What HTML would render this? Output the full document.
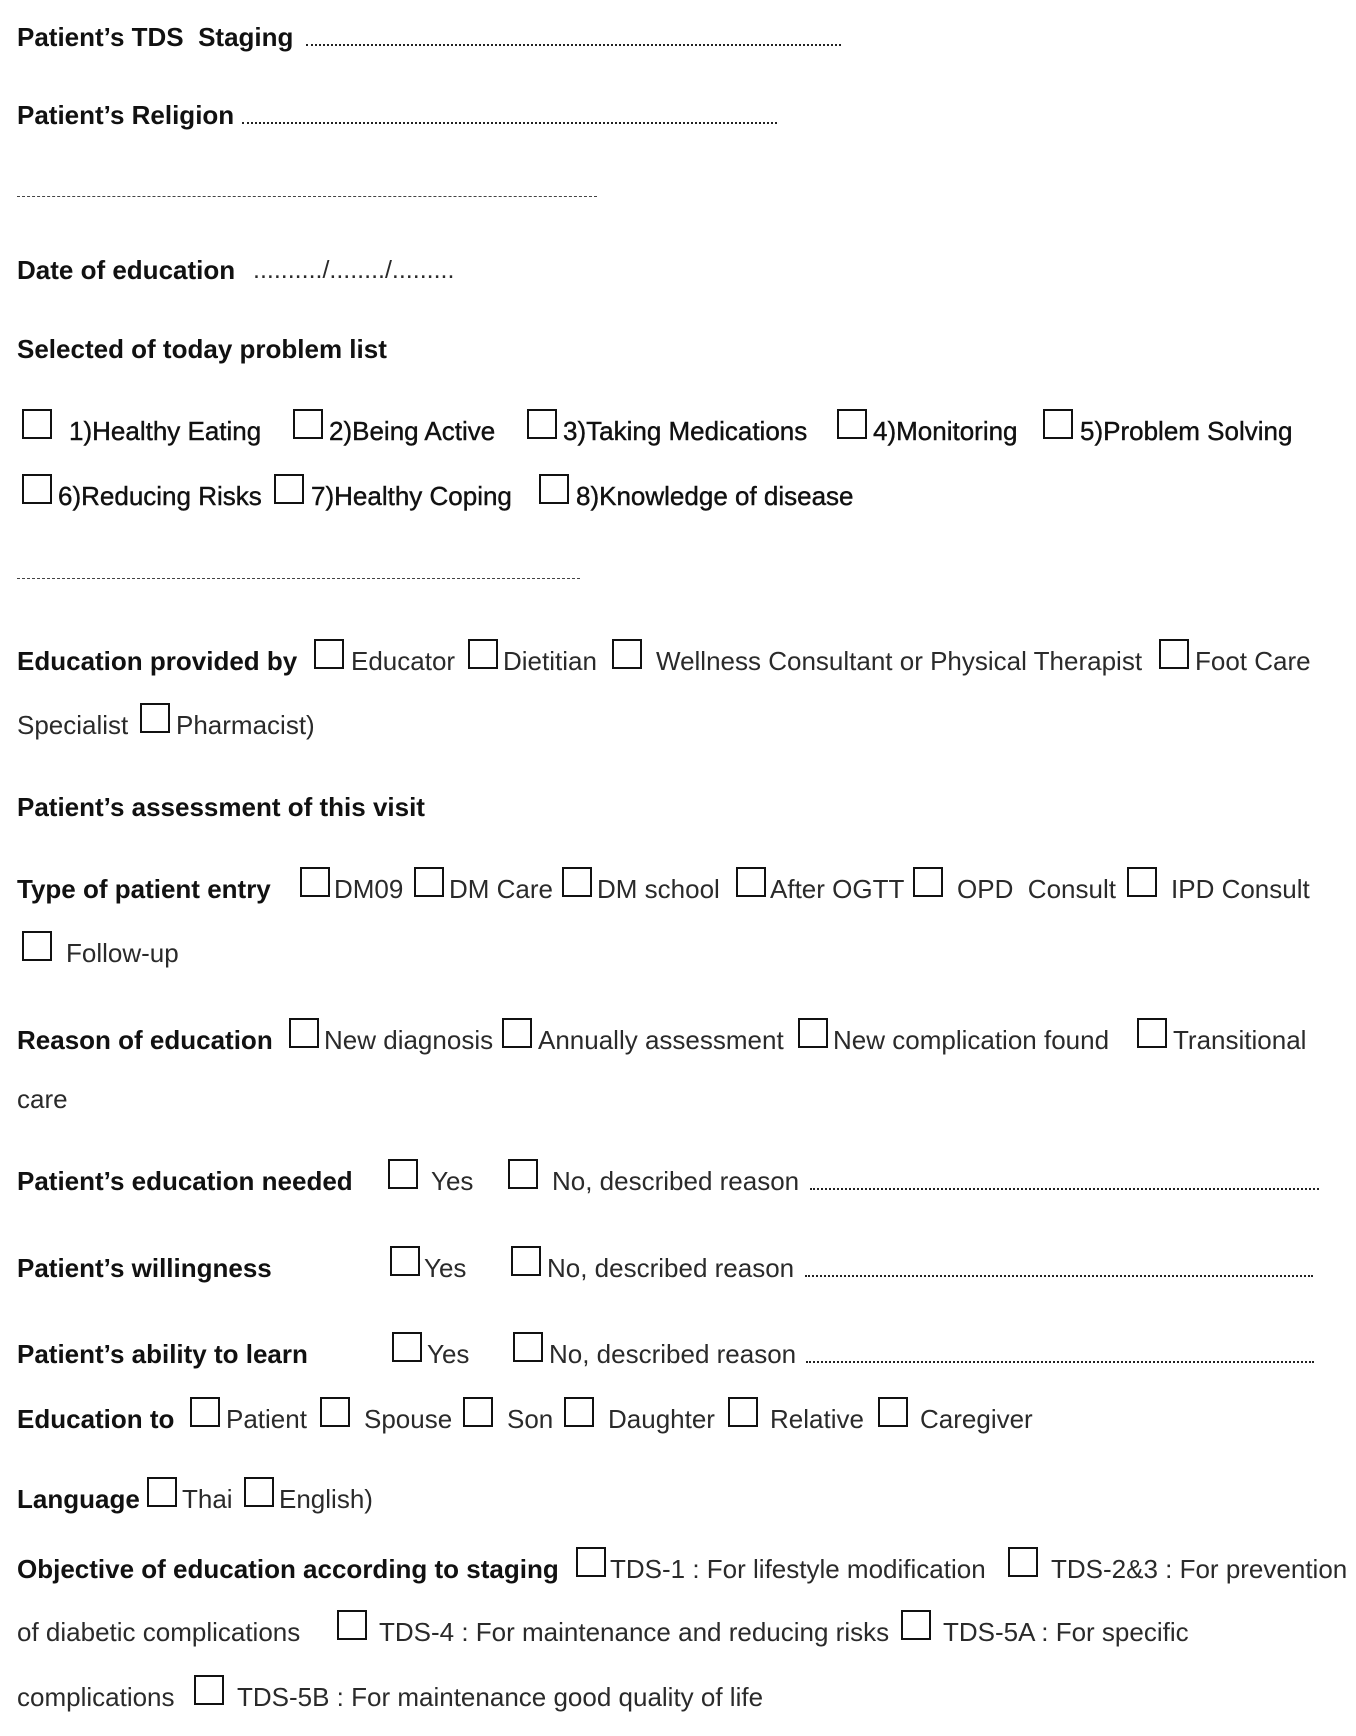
<!DOCTYPE html>
<html><head><meta charset="utf-8"><style>
body{margin:0;background:#fff;width:1356px;height:1736px;position:relative;overflow:hidden;font-family:"Liberation Sans","Noto Sans CJK SC",sans-serif;color:#000}
.t{position:absolute;font-size:26px;line-height:30px;white-space:nowrap;color:#2a2a2a}
.b{color:#111;font-weight:bold}
.p{color:#111;-webkit-text-stroke:0.4px #111}
.c{position:absolute;width:30px;height:30px;box-sizing:border-box;border:2px solid #111}
.d{position:absolute;height:0;border-bottom:2px dotted #222}
.h{position:absolute;height:0;border-bottom:1.5px dashed #444}
</style></head><body>
<span class="t b" style="left:17px;top:22px">Patient’s TDS&nbsp; Staging</span><div class="d" style="left:306px;top:44px;width:535px"></div>
<span class="t b" style="left:17px;top:100px">Patient’s Religion</span><div class="d" style="left:242px;top:122px;width:535px"></div>
<div class="h" style="left:17px;top:196px;width:580px"></div>
<span class="t b" style="left:17px;top:255px">Date of education</span><span class="t" style="left:253px;top:255px;font-size:25px;letter-spacing:0px">........../......../.........</span>
<span class="t b" style="left:17px;top:334px">Selected of today problem list</span>

<div class="c" style="left:22px;top:409px"></div><span class="t p" style="left:69px;top:416px">1)Healthy Eating</span>
<div class="c" style="left:293px;top:409px"></div><span class="t p" style="left:329px;top:416px">2)Being Active</span>
<div class="c" style="left:527px;top:409px"></div><span class="t p" style="left:563px;top:416px">3)Taking Medications</span>
<div class="c" style="left:837px;top:409px"></div><span class="t p" style="left:873px;top:416px">4)Monitoring</span>
<div class="c" style="left:1043px;top:409px"></div><span class="t p" style="left:1080px;top:416px">5)Problem Solving</span>

<div class="c" style="left:22px;top:474px"></div><span class="t p" style="left:58px;top:481px">6)Reducing Risks</span>
<div class="c" style="left:274px;top:474px"></div><span class="t p" style="left:311px;top:481px">7)Healthy Coping</span>
<div class="c" style="left:539px;top:474px"></div><span class="t p" style="left:576px;top:481px">8)Knowledge of disease</span>

<div class="h" style="left:17px;top:578px;width:563px"></div>

<span class="t b" style="left:17px;top:646px">Education provided by</span>
<div class="c" style="left:314px;top:639px"></div><span class="t" style="left:351px;top:646px">Educator</span>
<div class="c" style="left:468px;top:639px"></div><span class="t" style="left:503px;top:646px">Dietitian</span>
<div class="c" style="left:612px;top:639px"></div><span class="t" style="left:656px;top:646px">Wellness Consultant or Physical Therapist</span>
<div class="c" style="left:1159px;top:639px"></div><span class="t" style="left:1195px;top:646px">Foot Care</span>
<span class="t" style="left:17px;top:710px">Specialist</span>
<div class="c" style="left:140px;top:703px"></div><span class="t" style="left:176px;top:710px">Pharmacist)</span>

<span class="t b" style="left:17px;top:792px">Patient’s assessment of this visit</span>

<span class="t b" style="left:17px;top:874px">Type of patient entry</span>
<div class="c" style="left:300px;top:867px"></div><span class="t" style="left:334px;top:874px">DM09</span>
<div class="c" style="left:414px;top:867px"></div><span class="t" style="left:449px;top:874px">DM Care</span>
<div class="c" style="left:562px;top:867px"></div><span class="t" style="left:597px;top:874px">DM school</span>
<div class="c" style="left:736px;top:867px"></div><span class="t" style="left:770px;top:874px">After OGTT</span>
<div class="c" style="left:913px;top:867px"></div><span class="t" style="left:957px;top:874px">OPD&nbsp; Consult</span>
<div class="c" style="left:1127px;top:867px"></div><span class="t" style="left:1171px;top:874px">IPD Consult</span>
<div class="c" style="left:22px;top:931px"></div><span class="t" style="left:66px;top:938px">Follow-up</span>

<span class="t b" style="left:17px;top:1025px">Reason of education</span>
<div class="c" style="left:289px;top:1018px"></div><span class="t" style="left:324px;top:1025px">New diagnosis</span>
<div class="c" style="left:502px;top:1018px"></div><span class="t" style="left:538px;top:1025px">Annually assessment</span>
<div class="c" style="left:798px;top:1018px"></div><span class="t" style="left:833px;top:1025px">New complication found</span>
<div class="c" style="left:1137px;top:1018px"></div><span class="t" style="left:1173px;top:1025px">Transitional</span>
<span class="t" style="left:17px;top:1084px">care</span>

<span class="t b" style="left:17px;top:1166px">Patient’s education needed</span>
<div class="c" style="left:388px;top:1159px"></div><span class="t" style="left:431px;top:1166px">Yes</span>
<div class="c" style="left:508px;top:1159px"></div><span class="t" style="left:552px;top:1166px">No, described reason</span><div class="d" style="left:810px;top:1188px;width:509px"></div>

<span class="t b" style="left:17px;top:1253px">Patient’s willingness</span>
<div class="c" style="left:390px;top:1246px"></div><span class="t" style="left:424px;top:1253px">Yes</span>
<div class="c" style="left:511px;top:1246px"></div><span class="t" style="left:547px;top:1253px">No, described reason</span><div class="d" style="left:805px;top:1275px;width:508px"></div>

<span class="t b" style="left:17px;top:1339px">Patient’s ability to learn</span>
<div class="c" style="left:392px;top:1332px"></div><span class="t" style="left:427px;top:1339px">Yes</span>
<div class="c" style="left:513px;top:1332px"></div><span class="t" style="left:549px;top:1339px">No, described reason</span><div class="d" style="left:806px;top:1361px;width:508px"></div>

<span class="t b" style="left:17px;top:1404px">Education to</span>
<div class="c" style="left:190px;top:1397px"></div><span class="t" style="left:226px;top:1404px">Patient</span>
<div class="c" style="left:320px;top:1397px"></div><span class="t" style="left:364px;top:1404px">Spouse</span>
<div class="c" style="left:463px;top:1397px"></div><span class="t" style="left:507px;top:1404px">Son</span>
<div class="c" style="left:564px;top:1397px"></div><span class="t" style="left:608px;top:1404px">Daughter</span>
<div class="c" style="left:728px;top:1397px"></div><span class="t" style="left:770px;top:1404px">Relative</span>
<div class="c" style="left:878px;top:1397px"></div><span class="t" style="left:920px;top:1404px">Caregiver</span>

<span class="t b" style="left:17px;top:1484px">Language</span>
<div class="c" style="left:147px;top:1477px"></div><span class="t" style="left:182px;top:1484px">Thai</span>
<div class="c" style="left:244px;top:1477px"></div><span class="t" style="left:279px;top:1484px">English)</span>

<span class="t b" style="left:17px;top:1554px">Objective of education according to staging</span>
<div class="c" style="left:576px;top:1547px"></div><span class="t" style="left:610px;top:1554px">TDS-1 : For lifestyle modification</span>
<div class="c" style="left:1008px;top:1547px"></div><span class="t" style="left:1051px;top:1554px">TDS-2&amp;3 : For prevention</span>
<span class="t" style="left:17px;top:1617px">of diabetic complications</span>
<div class="c" style="left:337px;top:1610px"></div><span class="t" style="left:379px;top:1617px">TDS-4 : For maintenance and reducing risks</span>
<div class="c" style="left:901px;top:1610px"></div><span class="t" style="left:943px;top:1617px">TDS-5A : For specific</span>
<span class="t" style="left:17px;top:1682px">complications</span>
<div class="c" style="left:194px;top:1675px"></div><span class="t" style="left:237px;top:1682px">TDS-5B : For maintenance good quality of life</span>
</body></html>
